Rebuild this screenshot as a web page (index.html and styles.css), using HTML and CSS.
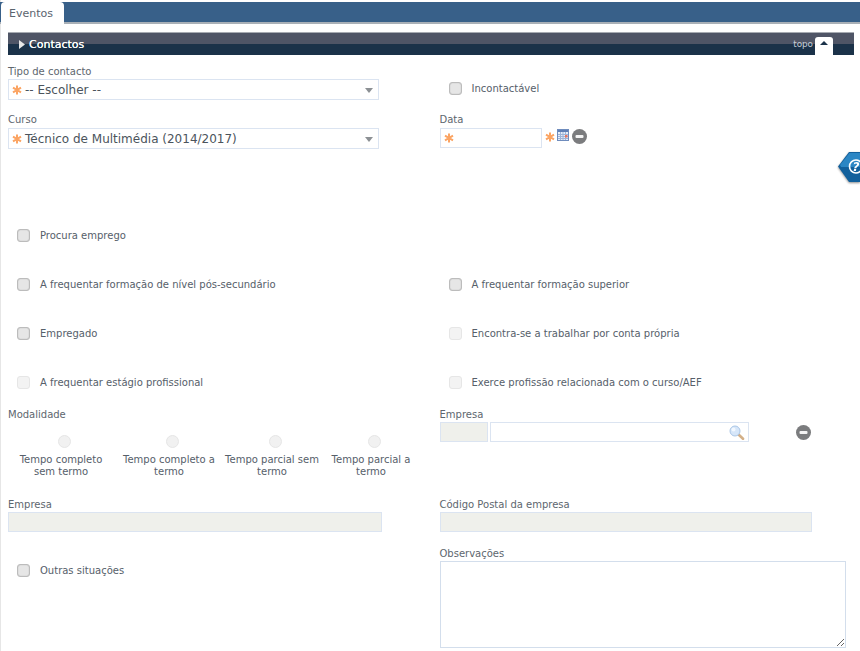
FILE: index.html
```html
<!DOCTYPE html>
<html lang="pt">
<head>
<meta charset="utf-8">
<title>Eventos</title>
<link rel="stylesheet" href="styles.css">
</head>
<body>
<svg class="defs" width="0" height="0" aria-hidden="true">
  <symbol id="star" viewBox="0 0 10 10">
    <path d="M5 .5v9M1 2.600l8 4.800M9 2.600L1 7.400" stroke="#fba463" stroke-width="2" fill="none"/>
  </symbol>
  <symbol id="minus" viewBox="0 0 15 15">
    <circle cx="7.500" cy="7.500" r="7.500" fill="#7b7c7e"/>
    <rect x="3.500" y="6" width="8" height="3" rx="1" fill="#f4f4f4"/>
  </symbol>
</svg>
<div class="page">
  <nav class="tabs"><div class="tab">Eventos</div></nav>

  <header class="section">
    <svg class="caret" width="6" height="9" viewBox="0 0 6 9"><path d="M0 0l6 4.500L0 9z" fill="#e8e8e8"/></svg>
    <span class="section-title">Contactos</span>
    <span class="topo">topo</span>
    <span class="topo-btn"><svg width="8" height="4" viewBox="0 0 8 4"><path d="M4 0l4 4H0z" fill="#1b3249"/></svg></span>
  </header>

  <div class="row row-a">
    <div class="col">
      <label class="lbl">Tipo de contacto</label>
      <div class="select"><svg class="star"><use href="#star"/></svg><span class="sel-text">-- Escolher --</span><i class="arrow"></i></div>
    </div>
    <div class="col check-cell"><span class="check"><input type="checkbox"><span>Incontactável</span></span></div>
  </div>

  <div class="row row-b">
    <div class="col">
      <label class="lbl">Curso</label>
      <div class="select"><svg class="star"><use href="#star"/></svg><span class="sel-text">Técnico de Multimédia (2014/2017)</span><i class="arrow"></i></div>
    </div>
    <div class="col">
      <label class="lbl">Data</label>
      <div class="date-line">
        <div class="input date"><svg class="star"><use href="#star"/></svg></div>
        <svg class="star star-out"><use href="#star"/></svg>
        <svg class="cal" width="12" height="12" viewBox="0 0 12 12">
          <rect x=".5" y=".5" width="11" height="11" fill="#e6edf8" stroke="#6f8cbd"/>
          <rect x="1" y="1" width="10" height="2" fill="#5f7fb5"/>
          <path d="M1 5.500h10M1 7.500h10M1 9.500h10M3.500 3v8M6 3v8M8.500 3v8" stroke="#9db4d8" stroke-width="1"/>
          <rect x="8" y="6" width="2.500" height="2.500" fill="#e8745f"/>
        </svg>
        <svg class="minus"><use href="#minus"/></svg>
      </div>
    </div>
  </div>

  <div class="row row-check first">
    <div class="col"><span class="check"><input type="checkbox"><span>Procura emprego</span></span></div>
    <div class="col"></div>
  </div>
  <div class="row row-check">
    <div class="col"><span class="check"><input type="checkbox"><span>A frequentar formação de nível pós-secundário</span></span></div>
    <div class="col"><span class="check"><input type="checkbox"><span>A frequentar formação superior</span></span></div>
  </div>
  <div class="row row-check">
    <div class="col"><span class="check"><input type="checkbox"><span>Empregado</span></span></div>
    <div class="col"><span class="check"><input type="checkbox" disabled><span>Encontra-se a trabalhar por conta própria</span></span></div>
  </div>
  <div class="row row-check">
    <div class="col"><span class="check"><input type="checkbox" disabled><span>A frequentar estágio profissional</span></span></div>
    <div class="col"><span class="check"><input type="checkbox" disabled><span>Exerce profissão relacionada com o curso/AEF</span></span></div>
  </div>

  <div class="row row-mod">
    <div class="col">
      <label class="lbl">Modalidade</label>
      <div class="radios">
        <div class="radio"><input type="radio" disabled><span>Tempo completo sem termo</span></div>
        <div class="radio"><input type="radio" disabled><span>Tempo completo a termo</span></div>
        <div class="radio"><input type="radio" disabled><span>Tempo parcial sem termo</span></div>
        <div class="radio"><input type="radio" disabled><span>Tempo parcial a termo</span></div>
      </div>
    </div>
    <div class="col">
      <label class="lbl">Empresa</label>
      <div class="emp-line">
        <div class="input off emp-code"></div>
        <div class="input emp-name">
          <svg width="16" height="15" viewBox="0 0 16 15">
            <path d="M9.500 9.500l4.500 4.300" stroke="#d3b088" stroke-width="2.600" stroke-linecap="round"/>
            <circle cx="6" cy="6" r="5" fill="#d6e6f9" stroke="#aac6e6"/>
            <circle cx="4.500" cy="4.500" r="2" fill="#f2f8ff"/>
          </svg>
        </div>
        <svg class="minus minus-emp"><use href="#minus"/></svg>
      </div>
    </div>
  </div>

  <div class="row row-emp">
    <div class="col">
      <label class="lbl">Empresa</label>
      <div class="input off w-left"></div>
    </div>
    <div class="col">
      <label class="lbl">Código Postal da empresa</label>
      <div class="input off w-right"></div>
    </div>
  </div>

  <div class="row row-last">
    <div class="col outras"><span class="check"><input type="checkbox"><span>Outras situações</span></span></div>
    <div class="col">
      <label class="lbl">Observações</label>
      <textarea class="obs"></textarea>
    </div>
  </div>
</div>

<div class="help">
  <svg width="22" height="32" viewBox="0 0 22 32">
    <path d="M0 15.500L11 1h11v30H11z" fill="#12609c"/>
    <path d="M2 14L11.500 2H22v14H3z" fill="#2b86c4"/>
    <circle cx="18" cy="15.500" r="6.500" fill="none" stroke="#fff" stroke-width="1.600"/>
    <text x="18" y="20" class="help-q" text-anchor="middle">?</text>
  </svg>
</div>
</body>
</html>
```

FILE: styles.css
```css
* { box-sizing: border-box; }
html, body { margin: 0; padding: 0; height: 651px; overflow: hidden; background: #fff; }
body {
  font-family: "DejaVu Sans", sans-serif;
  font-size: 10px;
  color: #56606a;
  position: relative;
}
.defs { position: absolute; }
.page { border-left: 1px solid #e6e6e6; height: 651px; padding-top: 2px; }

.tabs {
  height: 22px;
  background: #386089;
  border-bottom: 2px solid #a9b0b7;
  display: flex;
  margin-left: -1px;
}
.tab {
  width: 63px;
  height: 22px;
  margin-left: 1px;
  background: #fff;
  border-radius: 4px 4px 0 0;
  color: #5a646e;
  font-size: 11px;
  padding: 5px 0 0 8px;
}

.section {
  margin: 8px 6px 0 7px;
  height: 23px;
  background: linear-gradient(#4f5566 0, #4f5566 50%, #1b3249 50%, #1b3249 100%);
  border-top: 1px solid #a7abb2;
  display: flex;
  align-items: center;
  padding-left: 11px;
  position: relative;
}
.caret { margin-right: 4px; }
.section-title { color: #fff; font-size: 11px; text-shadow: 0 0 .3px #fff; }
.topo { margin-left: auto; color: #c8ced6; font-size: 8.800px; margin-right: 2px; }
.topo-btn {
  width: 18px;
  height: 18px;
  margin: 4px 21px 0 0;
  align-self: flex-start;
  background: #fff;
  border-radius: 3px 3px 0 0;
  display: flex;
  justify-content: center;
  padding-top: 4px;
}

.row { display: grid; grid-template-columns: 431.500px 1fr; padding-left: 7px; }
.col { min-width: 0; position: relative; }
.lbl { display: block; height: 14px; line-height: 16px; color: #5d666e; }

.row-a { margin-top: 9px; height: 37px; }
.row-b { margin-top: 11px; height: 38px; }
.row-a .lbl { margin-bottom: 1px; }
.row-b .lbl { margin-bottom: 2px; }
.check-cell { padding-top: 14px; }

.select {
  width: 371px;
  height: 21px;
  border: 1px solid #dbe4f1;
  display: flex;
  align-items: center;
  padding-left: 3px;
  font-size: 12px;
  color: #4b545c;
  background: #fff;
}
.sel-text { margin-left: 3px; }
.arrow {
  margin-left: auto;
  margin-right: 5px;
  margin-top: 2px;
  width: 0;
  height: 0;
  border-left: 4px solid transparent;
  border-right: 4px solid transparent;
  border-top: 5px solid #8c9094;
}
.star { width: 10px; height: 10px; flex: none; display: block; }

.input { border: 1px solid #dbe4f1; height: 20px; background: #fff; }
.input.off { background: #eff0eb; }
.date-line, .emp-line { display: flex; align-items: center; }
.date { width: 102px; margin-left: .5px; display: flex; align-items: center; padding-left: 3px; }
.star-out { margin-left: 3px; margin-top: -3px; }
.cal { margin-left: 2px; margin-top: -6px; }
.minus { width: 15px; height: 15px; display: block; margin-left: 3px; }
.date-line .minus { margin-top: -4px; }
.minus-emp { margin-left: 47px; }

.check { display: flex; align-items: center; height: 20px; padding-left: 9px; }
.check input {
  appearance: none;
  width: 13px;
  height: 13px;
  margin: 0 10px 0 0;
  border: 1px solid #bcbcbc;
  border-radius: 3px;
  background: #e6e6e6;
  box-shadow: inset 0 0 1px #9a9a9a;
  flex: none;
}
.check input:disabled { background: #f3f3f3; border-color: #e6e6e6; box-shadow: none; }
.check span { white-space: nowrap; }

.row-check { margin-top: 29px; height: 20px; }
.row-check.first { margin-top: 75px; }

.row-mod { margin-top: 15px; height: 90px; }
.radios { display: grid; grid-template-columns: 106px 110px 96px 102px; margin-top: 14px; }
.radio { display: flex; flex-direction: column; align-items: center; text-align: center; line-height: 12px; }
.radio input {
  appearance: none;
  width: 13px;
  height: 13px;
  margin: 0 0 6px 6px;
  border: 1px solid #e6e6e6;
  border-radius: 50%;
  background: #f1f1f1;
}
.emp-line { height: 20px; margin-top: 1px; }
.emp-code { width: 48px; margin-left: .5px; }
.emp-name {
  width: 259px;
  margin-left: 2px;
  display: flex;
  align-items: center;
  justify-content: flex-end;
  padding-right: 3px;
}

.row-emp { height: 35px; }
.row-emp .lbl { margin-bottom: 1px; }
.w-left { width: 374px; }
.w-right { width: 372px; margin-left: .5px; }

.row-last { margin-top: 14px; }
.outras { padding-top: 14px; }
.obs {
  display: block;
  width: 406px;
  height: 87px;
  margin: 1px 0 0 .5px;
  border: 1px solid #d3deec;
  background: #fff;
  resize: both;
}

.help { position: absolute; left: 838px; top: 151px; width: 22px; height: 32px; filter: drop-shadow(0 1px 1px rgba(0, 0, 0, .45)); }
.help svg { display: block; }
.help-q { font-family: "DejaVu Sans", sans-serif; font-size: 12px; font-style: italic; font-weight: 700; fill: #fff; }
```
